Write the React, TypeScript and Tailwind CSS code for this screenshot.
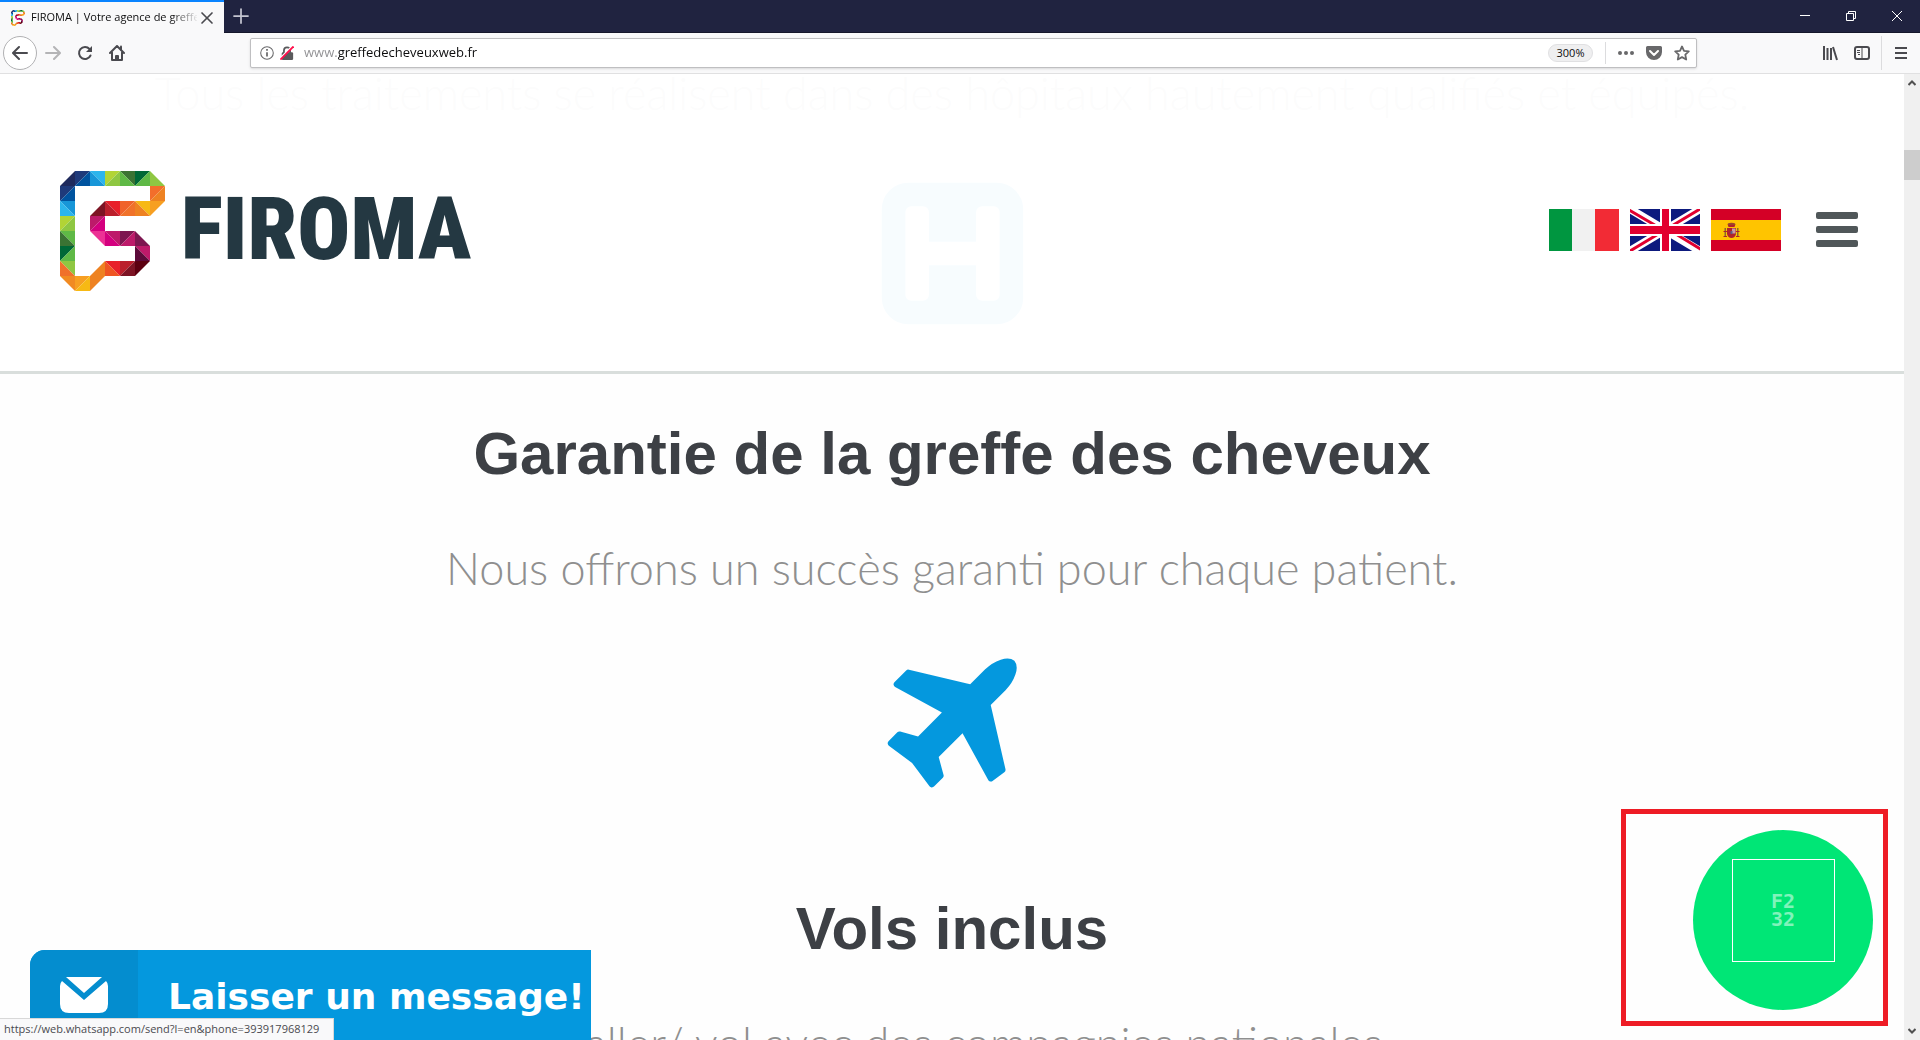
import React from 'react';
import { Plus, X } from 'lucide-react';

// Each logo cell: column, row, colour of one half, colour of the other half.
// "/" cells are [upper-left, lower-right], "\" cells are [upper-right, lower-left].
type Cell = [number, number, '/' | '\\', string | null, string | null];

const logoCells: Cell[] = [
  [0, 0, '/', null, '#1f2a5c'],
  [1, 0, '/', '#1f3a7a', '#00539f'],
  [2, 0, '\\', '#2cb5ec', '#1796d8'],
  [3, 0, '/', '#b2d435', '#8fc742'],
  [4, 0, '\\', '#3b7333', '#5fb946'],
  [5, 0, '/', '#006837', '#5fb946'],
  [6, 0, '\\', null, '#8fc742'],
  [0, 1, '/', '#1f3a7a', '#00539f'],
  [6, 1, '/', '#f36e2b', '#ee8222'],
  [0, 2, '\\', '#1796d8', '#2cb5ec'],
  [2, 2, '/', null, '#7d1424'],
  [3, 2, '\\', '#e8202a', '#bb1f2c'],
  [4, 2, '/', '#f0632a', '#f0722a'],
  [5, 2, '\\', '#f7b914', '#ee8222'],
  [6, 2, '/', '#f79f22', null],
  [0, 3, '/', '#b2d435', '#8fc742'],
  [2, 3, '/', '#bd1a6a', '#d4007f'],
  [0, 4, '\\', '#5fb946', '#3b7333'],
  [2, 4, '\\', '#ec3295', null],
  [3, 4, '\\', '#bd1a6a', '#d4007f'],
  [4, 4, '/', '#7d1650', '#bd1a6a'],
  [5, 4, '\\', null, '#7d1650'],
  [0, 5, '/', '#006837', '#5fb946'],
  [5, 5, '\\', '#bd1a6a', '#5c0a3a'],
  [0, 6, '\\', '#8fc742', '#f0702b'],
  [2, 6, '/', null, '#ee8222'],
  [3, 6, '\\', '#e8202a', '#ef5523'],
  [4, 6, '/', '#bb1f2c', '#7d1424'],
  [5, 6, '/', '#5c0010', null],
  [0, 7, '\\', '#f18a22', null],
  [1, 7, '/', '#f79f22', '#f7b914'],
  [2, 7, '/', '#ee8222', null],
];

const LogoMark = ({ className }: { className: string }) => (
  <svg viewBox="0 0 105 120" className={className} aria-hidden="true">
    {logoCells.map(([col, row, diagonal, first, second]) => {
      const x = col * 15;
      const y = row * 15;
      const a = diagonal === '/' ? `${x},${y} ${x + 15},${y} ${x},${y + 15}` : `${x},${y} ${x + 15},${y} ${x + 15},${y + 15}`;
      const b = diagonal === '/' ? `${x + 15},${y} ${x + 15},${y + 15} ${x},${y + 15}` : `${x},${y} ${x + 15},${y + 15} ${x},${y + 15}`;
      return (
        <g key={`${col}-${row}`}>
          {first && <polygon points={a} fill={first} />}
          {second && <polygon points={b} fill={second} />}
        </g>
      );
    })}
  </svg>
);

const ItalyFlag = () => (
  <svg viewBox="0 0 70 42" className="h-[42px] w-[70px]" aria-hidden="true">
    <path fill="#009640" d="M0 0h23v42H0z" />
    <path fill="#f1f1f1" d="M23 0h23v42H23z" />
    <path fill="#f22b35" d="M46 0h24v42H46z" />
  </svg>
);

const UkFlag = () => (
  <svg viewBox="0 0 70 42" className="h-[42px] w-[70px]" aria-hidden="true">
    <path fill="#0d1a7e" d="M0 0h70v42H0z" />
    <path stroke="#fff" strokeWidth="8" d="M0 0l70 42M70 0L0 42" />
    <path stroke="#e2002f" strokeWidth="3" d="M-1 1l36 21M70 0L35 21M35 21L0 42M36 19l36 22" />
    <path fill="#fff" d="M30 0h11v42H30zM0 15h70v12H0z" />
    <path fill="#e2002f" d="M32 0h7v42h-7zM0 17h70v8H0z" />
  </svg>
);

const SpainFlag = () => (
  <svg viewBox="0 0 70 42" className="h-[42px] w-[70px]" aria-hidden="true">
    <path fill="#d40026" d="M0 0h70v42H0z" />
    <path fill="#ffc400" d="M0 11h70v20H0z" />
    <path fill="#b0232b" d="M16.500 15q4-2.500 8 0l-1 3h-6zM16 19h9v6q-1 4-4.500 4T16 25z" />
    <path fill="#c99aa5" d="M21 19.500h3.500v5H21z" />
    <path fill="#5c5a8a" d="M19.500 22h2v3h-2z" />
    <path fill="#8a6a2a" d="M13.500 19h1.500v9h-1.500zM26 19h1.500v9H26zM17 14.500h7v1h-7z" />
    <path stroke="#b0232b" strokeWidth="1" d="M12.500 22.500h3.500M25 22.500h3.500M12.500 27.500h3.500M25 27.500h3.500" />
  </svg>
);

const HospitalIcon = () => (
  <svg viewBox="0 0 1792 1792" className="h-[165px] w-[165px]" fill="#0498de" aria-hidden="true">
    <path d="M1408 1344v-896q0-26-19-45t-45-19h-128q-26 0-45 19t-19 45v320h-512v-320q0-26-19-45t-45-19h-128q-26 0-45 19t-19 45v896q0 26 19 45t45 19h128q26 0 45-19t19-45v-320h512v320q0 26 19 45t45 19h128q26 0 45-19t19-45zm256-928v960q0 119-84.500 203.500t-203.500 84.500h-960q-119 0-203.500-84.500t-84.500-203.500v-960q0-119 84.500-203.500t203.500-84.500h960q119 0 203.500 84.500t84.500 203.500z" />
  </svg>
);

const PlaneIcon = () => (
  <svg viewBox="0 0 1792 1792" className="h-[165px] w-[165px]" fill="#0498de" aria-hidden="true">
    <path d="M1568 160q44 52 12 148t-108 172l-161 161 160 696q5 19-12 33l-128 96q-7 6-19 6-4 0-7-1-15-3-21-16l-279-508-259 259 53 194q5 17-8 31l-96 96q-9 9-23 9h-2q-15-2-24-13l-189-252-252-189q-11-7-13-23-1-13 9-25l96-97q9-9 23-9 6 0 8 1l194 53 259-259-508-279q-14-8-17-24-2-16 9-27l128-128q14-13 30-8l665 159 160-160q76-76 172-108t148 12z" />
  </svg>
);

const TabBar = () => (
  <div className="flex h-[33px] shrink-0 items-stretch border-b border-[#15172b] bg-[#202340]">
    <div className="-mb-px flex w-56 items-center border-t-2 border-[#0a84ff] bg-[#f9f9fa] pl-[10px]">
      <LogoMark className="h-4 w-4 shrink-0" />
      <span className="ml-[5px] w-[166px] overflow-hidden whitespace-nowrap bg-[linear-gradient(90deg,#0c0c0d_140px,transparent_168px)] bg-clip-text text-[11px] text-transparent">
        FIROMA | Votre agence de greffe
      </span>
      <button aria-label="Fermer l'onglet" className="text-[#4a4a4f]">
        <X className="h-5 w-5" />
      </button>
    </div>
    <button aria-label="Nouvel onglet" className="flex w-[34px] items-center justify-center text-[#c4c5d0]">
      <Plus className="h-6 w-6" strokeWidth={1.75} />
    </button>
    <div className="ml-auto flex text-white">
      <button aria-label="Réduire" className="flex w-[46px] items-center justify-center">
        <svg viewBox="0 0 10 10" className="h-[10px] w-[10px]" aria-hidden="true">
          <path fill="currentColor" d="M0 4h10v1H0z" />
        </svg>
      </button>
      <button aria-label="Restaurer" className="flex w-[46px] items-center justify-center">
        <svg viewBox="0 0 10 10" className="h-[10px] w-[10px]" fill="none" stroke="currentColor" aria-hidden="true">
          <path d="M.5 2.500h7v7h-7zM2.500 2.500v-2h7v7h-2" />
        </svg>
      </button>
      <button aria-label="Fermer" className="flex w-[46px] items-center justify-center">
        <svg viewBox="0 0 10 10" className="h-[10px] w-[10px]" stroke="currentColor" aria-hidden="true">
          <path d="M0 0l10 10M10 0L0 10" />
        </svg>
      </button>
    </div>
  </div>
);

const ToolBar = () => (
  <div className="flex h-[41px] shrink-0 items-center border-b border-[#e0e0e1] bg-[#f9f9fa] pl-[3px] text-[#4a4a4f]">
    <button aria-label="Précédent" className="flex h-[34px] w-[34px] items-center justify-center rounded-full border border-[#b1b1b3] bg-white">
      <svg viewBox="0 0 16 16" className="h-4 w-4" fill="none" stroke="currentColor" strokeWidth="2" strokeLinecap="round" strokeLinejoin="round" aria-hidden="true">
        <path d="M15 8H1.500M7 2L1 8l6 6" />
      </svg>
    </button>
    <button aria-label="Suivant" className="flex w-8 items-center justify-center text-[#b4b4b6]">
      <svg viewBox="0 0 16 16" className="h-4 w-4" fill="none" stroke="currentColor" strokeWidth="2" strokeLinecap="round" strokeLinejoin="round" aria-hidden="true">
        <path d="M1 8h13.500M9 2l6 6-6 6" />
      </svg>
    </button>
    <button aria-label="Actualiser" className="flex w-8 items-center justify-center">
      <svg viewBox="0 0 16 16" className="h-4 w-4" fill="none" stroke="currentColor" strokeWidth="2" strokeLinecap="round" aria-hidden="true">
        <path d="M13.500 10.500A6 6 0 1 1 12.500 4" />
        <path d="M15 1v6H9z" fill="currentColor" stroke="none" />
      </svg>
    </button>
    <button aria-label="Accueil" className="flex w-8 items-center justify-center">
      <svg viewBox="0 0 16 16" className="h-4 w-4" fill="none" stroke="currentColor" strokeWidth="2" strokeLinecap="round" strokeLinejoin="round" aria-hidden="true">
        <path d="M1 8l7-7 7 7M3 7.500V15h10V7.500" />
        <path d="M7 15v-4h2v4" />
        <path d="M12 1.500v3" />
      </svg>
    </button>

    <div className="ml-[117px] flex h-[30px] grow items-center rounded-[2px] border border-[#bfbfc1] bg-white pl-[9px] shadow-sm">
      <svg viewBox="0 0 16 16" className="h-[14px] w-[14px] shrink-0" fill="none" stroke="#6a6a6c" aria-hidden="true">
        <circle cx="8" cy="8" r="7.200" strokeWidth="1.200" />
        <path d="M8 7v5M8 3.500v2" strokeWidth="2" />
      </svg>
      <svg viewBox="0 0 16 16" className="ml-[6px] h-[14px] w-[14px] shrink-0" aria-hidden="true">
        <path fill="none" stroke="#5a5a5c" strokeWidth="2" d="M4.500 8V5a3.500 3.500 0 0 1 7 0v3" />
        <rect x="2" y="7" width="13" height="9" rx="1.500" fill="#5a5a5c" />
        <path stroke="#fff" strokeWidth="2.500" d="M0 14.500L14.500 0" />
        <path stroke="#ff0f4b" strokeWidth="2.200" d="M.5 15.500L15.500.5" />
      </svg>
      <input
        aria-label="Adresse"
        defaultValue="www.greffedecheveuxweb.fr"
        className="ml-[10px] min-w-0 grow bg-[linear-gradient(90deg,#8f8f92_33px,#0c0c0d_33px)] bg-clip-text text-[13px] text-transparent outline-none"
      />
      <button className="h-[18px] w-[45px] rounded-full border border-[#e0e0e2] bg-[#efeff0] text-[11px] leading-4 text-[#0c0c0d]">300%</button>
      <span className="ml-3 h-[22px] w-px bg-[#dcdcde]" />
      <button aria-label="Actions" className="ml-[6px] flex w-7 items-center justify-center text-[#68686a]">
        <svg viewBox="0 0 16 16" className="h-4 w-4" fill="currentColor" aria-hidden="true">
          <circle cx="2" cy="8" r="2" />
          <circle cx="8" cy="8" r="2" />
          <circle cx="14" cy="8" r="2" />
        </svg>
      </button>
      <button aria-label="Pocket" className="flex w-7 items-center justify-center text-[#68686a]">
        <svg viewBox="0 0 16 16" className="h-4 w-4" aria-hidden="true">
          <path fill="currentColor" d="M1.500 1h13A1.500 1.500 0 0 1 16 2.500V7A8 8 0 0 1 0 7V2.500A1.500 1.500 0 0 1 1.500 1z" />
          <path fill="none" stroke="#fff" strokeWidth="2" strokeLinecap="round" strokeLinejoin="round" d="M4 6l4 4 4-4" />
        </svg>
      </button>
      <button aria-label="Marque-page" className="flex w-7 items-center justify-center text-[#68686a]">
        <svg viewBox="0 0 16 16" className="h-4 w-4" fill="none" stroke="currentColor" strokeWidth="1.800" strokeLinejoin="round" aria-hidden="true">
          <path d="M8 1.500l2 4.300 4.800.6-3.500 3.200.9 4.900L8 12.100l-4.200 2.400.9-4.900L1.200 6.400 6 5.800z" />
        </svg>
      </button>
    </div>

    <button aria-label="Bibliothèque" className="ml-[117px] flex w-8 items-center justify-center">
      <svg viewBox="0 0 16 16" className="h-4 w-4" fill="none" stroke="currentColor" strokeWidth="2" aria-hidden="true">
        <path d="M2 1v14M5.500 3v12M9 3v12M11 2l4 13" />
      </svg>
    </button>
    <button aria-label="Panneau latéral" className="flex w-8 items-center justify-center">
      <svg viewBox="0 0 16 16" className="h-4 w-4" fill="none" stroke="currentColor" aria-hidden="true">
        <rect x="1" y="2" width="14" height="12" rx="2" strokeWidth="2" />
        <path d="M8 2v12M3 5.500h3M3 7.500h3M4 9.500h2" />
      </svg>
    </button>
    <span className="ml-[3px] h-[34px] w-px bg-[#dcdcde]" />
    <button aria-label="Menu" className="flex w-[38px] items-center justify-center">
      <svg viewBox="0 0 12 12" className="h-3 w-3" fill="currentColor" aria-hidden="true">
        <path d="M0 0h12v2H0zM0 5h12v2H0zM0 10h12v2H0z" />
      </svg>
    </button>
  </div>
);

const SiteHeader = () => (
  <header className="absolute inset-x-0 top-0 flex h-[300px] items-center border-b-[3px] border-[#d9dedc] bg-white/97 pt-4 pr-[46px] pl-[60px]">
    <a href="/" aria-label="Firoma" className="flex items-center">
      <LogoMark className="h-[120px] w-[105px]" />
      <span className="ml-4 pb-1 font-['Roboto_Condensed',Roboto,sans-serif] text-[88px] leading-[112px] font-black text-[#243842]">FIROMA</span>
    </a>
    <nav className="ml-auto flex items-center gap-[11px] pb-[2px]">
      <a href="/it" aria-label="Italiano"><ItalyFlag /></a>
      <a href="/en" aria-label="English"><UkFlag /></a>
      <a href="/es" aria-label="Español"><SpainFlag /></a>
      <button aria-label="Ouvrir le menu" className="ml-6 flex flex-col gap-[7px]">
        <span className="h-[7px] w-[42px] rounded-[2px] bg-[#505759]" />
        <span className="h-[7px] w-[42px] rounded-[2px] bg-[#505759]" />
        <span className="h-[7px] w-[42px] rounded-[2px] bg-[#505759]" />
      </button>
    </nav>
  </header>
);

const Feature = ({ icon, title, text }: { icon: React.ReactNode; title: string; text: string }) => (
  <section className="flex flex-col items-center pt-[42px]">
    {icon}
    <h2 className="mt-[82px] text-[60px] leading-[72px] font-bold whitespace-nowrap text-[#3d4045] font-['Liberation_Sans',Arial,sans-serif]">{title}</h2>
    <p className="mt-[42px] font-[Lato,sans-serif] text-[45px] leading-[72px] font-light whitespace-nowrap text-[#8f8f8f]">{text}</p>
  </section>
);

const ScrollBar = () => (
  <div className="flex w-4 shrink-0 flex-col items-center bg-[#f0f0f0] text-[#505050]">
    <svg viewBox="0 0 8 6" className="mt-[6px] h-[6px] w-2" fill="none" stroke="currentColor" strokeWidth="2" aria-hidden="true">
      <path d="M.5 5L4 1.500 7.500 5" />
    </svg>
    <div className="mt-16 h-[30px] w-full bg-[#cdcdcd]" />
    <svg viewBox="0 0 8 6" className="mt-auto mb-[6px] h-[6px] w-2" fill="none" stroke="currentColor" strokeWidth="2" aria-hidden="true">
      <path d="M.5 1L4 4.500 7.500 1" />
    </svg>
  </div>
);

const App = () => {
  return (
    <div className="flex h-screen flex-col overflow-hidden bg-[#fefefe] font-['Open_Sans','Noto_Sans',sans-serif]">
      <TabBar />
      <ToolBar />

      <div className="flex min-h-0 grow">
        <main className="relative min-w-0 grow overflow-hidden">
          <div className="-mt-[17px]">
            <p className="text-center font-[Lato,sans-serif] text-[45px] leading-[72px] font-light whitespace-nowrap text-[#8f8f8f]">
              Tous les traitements se réalisent dans des hôpitaux hautement qualifiés et équipés.
            </p>
            <Feature icon={<HospitalIcon />} title="Garantie de la greffe des cheveux" text="Nous offrons un succès garanti pour chaque patient." />
            <Feature icon={<PlaneIcon />} title="Vols inclus" text="Vol aller/ vol avec des compagnies nationales." />
          </div>

          <SiteHeader />

          {/* Chat widget */}
          <button className="absolute bottom-0 left-[30px] flex h-[90px] items-stretch overflow-hidden rounded-tl-[15px] bg-[#0498de] text-white">
            <span className="flex w-[108px] items-center justify-center bg-[#048dcf]">
              <svg viewBox="0 0 48 36" className="h-9 w-12" fill="currentColor" aria-hidden="true">
                <path d="M6 0h36L24 16z" />
                <path d="M2 4l22 19L46 4q2 2 2 5v18q0 9-9 9H9q-9 0-9-9V9q0-3 2-5z" />
              </svg>
            </span>
            <span className="self-center pt-1 pr-[6px] pl-[30px] font-['DejaVu_Sans',Verdana,sans-serif] text-[36px] leading-10 font-bold whitespace-nowrap">
              Laisser un message!
            </span>
          </button>

          {/* Link status */}
          <div className="absolute bottom-0 left-0 h-[22px] w-[334px] border-t border-r border-[#d8d8d8] bg-[#f9f9fa] pl-1 text-[11px] leading-5 whitespace-nowrap text-[#4a4a4f]">
            https://web.whatsapp.com/send?l=en&amp;phone=393917968129
          </div>

          {/* WhatsApp */}
          <div className="absolute right-4 bottom-[14px] flex h-[217px] w-[267px] items-center justify-end border-[5px] border-[#ee1c25] pt-1 pr-[10px]">
            <a
              href="https://web.whatsapp.com/send?l=en&phone=393917968129"
              className="flex h-[180px] w-[180px] items-start justify-center rounded-full bg-[#00e676] pt-[29px]"
            >
              <span className="flex h-[103px] w-[103px] flex-col items-center justify-center border border-white font-['DejaVu_Sans_Mono',monospace] text-[20px] leading-[18px] font-bold text-[#80f3bb]">
                <span>F2</span>
                <span>32</span>
              </span>
            </a>
          </div>
        </main>
        <ScrollBar />
      </div>
    </div>
  );
};

export default App;
